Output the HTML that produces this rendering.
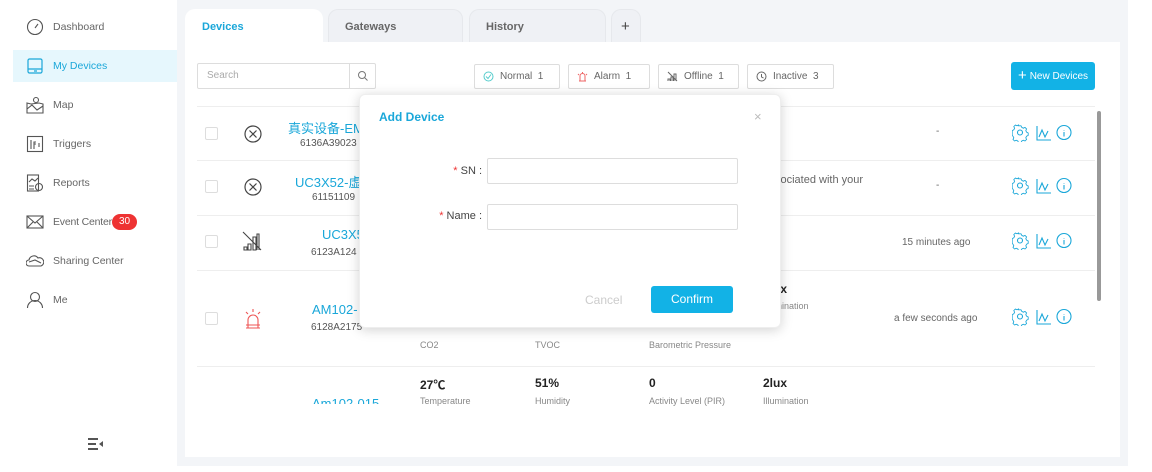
<!DOCTYPE html>
<html><head><meta charset="utf-8"><style>
*{box-sizing:border-box;margin:0;padding:0}
body{width:1152px;height:472px;overflow:hidden;background:#fff;font-family:"Liberation Sans","Noto Sans CJK SC",sans-serif;position:relative;color:#333}
.a{position:absolute}
.nav{position:absolute;left:13px;width:164px;height:32px;font-size:10.5px;color:#666;display:flex;align-items:center}
.nav svg{position:absolute;left:13px}
.nav span{position:absolute;left:40px}
.sel{background:#e6f7fd;color:#1aa7d9}
.tab{position:absolute;top:9px;height:33px;border-radius:10px 10px 0 0;background:#eff1f5;border:1px solid #e6e8ec;border-bottom:none;font-size:11px;font-weight:bold;color:#666;padding:11px 0 0 16px}
.chip{position:absolute;top:64px;height:25px;border:1px solid #ddd;border-radius:2px;font-size:10px;color:#666;display:flex;align-items:center;padding-left:8px;gap:6px;background:#fff}
.line{position:absolute;left:197px;width:898px;height:1px;background:#eee}
.cb{position:absolute;left:205px;width:13px;height:13px;border:1px solid #ddd;border-radius:2px}
.nm{position:absolute;font-size:13px;color:#1aa7d9}
.sn{position:absolute;font-size:10px;color:#555}
.val{position:absolute;font-size:12px;font-weight:bold;color:#222}
.lbl{position:absolute;font-size:9px;color:#888;line-height:12px}
.tm{position:absolute;font-size:10px;color:#666}
</style></head><body>
<div class="nav" style="top:11px"><svg width="18" height="18" viewBox="0 0 18 18" fill="none" stroke="#555" stroke-width="1.1"><circle cx="9" cy="9" r="7.5"/><path d="M9 10l3-4"/></svg><span>Dashboard</span></div>
<div class="nav sel" style="top:50px"><svg width="18" height="18" viewBox="0 0 18 18" fill="none" stroke="#1aa7d9" stroke-width="1.2"><rect x="2" y="2" width="14" height="14" rx="1.5"/><path d="M2 12h14M8 14h3"/></svg><span>My Devices</span></div>
<div class="nav" style="top:89px"><svg width="18" height="18" viewBox="0 0 18 18" fill="none" stroke="#555" stroke-width="1.1"><path d="M1 7l4 1 8-1 4 1v9H1z M1 13l5-4 5 5 6-4"/><circle cx="10" cy="4" r="2.5"/></svg><span>Map</span></div>
<div class="nav" style="top:128px"><svg width="18" height="18" viewBox="0 0 18 18" fill="none" stroke="#555" stroke-width="1.1"><rect x="1.5" y="1.5" width="15" height="15"/><path d="M5 5v9M8 14V7h2M8 9h2M13 8v4"/></svg><span>Triggers</span></div>
<div class="nav" style="top:167px"><svg width="18" height="18" viewBox="0 0 18 18" fill="none" stroke="#555" stroke-width="1.1"><rect x="1.5" y="1" width="11" height="16"/><path d="M3 8l3-3 3 2 3-3M3 12h5M3 15h5"/><circle cx="13" cy="13" r="3.5"/></svg><span>Reports</span></div>
<div class="nav" style="top:206px"><svg width="18" height="18" viewBox="0 0 18 18" fill="none" stroke="#555" stroke-width="1.1"><rect x="1" y="3" width="16" height="12"/><path d="M1 3l8 7 8-7M1 15l6-6M17 15l-6-6"/></svg><span style="letter-spacing:-0.2px">Event Center</span></div>
<div class="a" style="left:112px;top:214px;width:25px;height:16px;border-radius:8px;background:#ee3333;color:#fff;font-size:10px;text-align:center;line-height:16px">30</div>
<div class="nav" style="top:245px"><svg width="18" height="18" viewBox="0 0 18 18" fill="none" stroke="#555" stroke-width="1.1"><path d="M3 14a3 3 0 010-6 5 5 0 019-2 4 4 0 013 8z M3 10l6-2 6 3"/></svg><span>Sharing Center</span></div>
<div class="nav" style="top:284px"><svg width="18" height="18" viewBox="0 0 18 18" fill="none" stroke="#555" stroke-width="1.1"><circle cx="9" cy="6" r="4.5"/><path d="M1.5 17a7.5 7.5 0 0115 0"/></svg><span>Me</span></div>
<svg class="a" style="left:87px;top:437px" width="18" height="14" viewBox="0 0 18 14" fill="#555"><rect x="1" y="1" width="10" height="2"/><rect x="1" y="6" width="8" height="2"/><rect x="1" y="11" width="10" height="2"/><path d="M16 4v6l-4-3z"/></svg>
<div class="a" style="left:177px;top:0;width:951px;height:466px;background:#f3f5f8"></div>
<div class="a" style="left:185px;top:42px;width:935px;height:415px;background:#fff"></div>
<div class="tab" style="left:185px;width:138px;background:#fff;border-color:#fff;color:#1aa7d9">Devices</div>
<div class="tab" style="left:328px;width:135px">Gateways</div>
<div class="tab" style="left:469px;width:137px">History</div>
<div class="tab" style="left:611px;width:30px;padding:8px 0 0 9px;font-weight:normal;font-size:15px;color:#444">+</div>
<div class="a" style="left:197px;top:63px;width:179px;height:26px;border:1px solid #ddd;border-radius:2px"></div>
<div class="a" style="left:349px;top:63px;width:1px;height:26px;background:#ddd"></div>
<div class="a" style="left:207px;top:70px;font-size:10px;color:#aaa">Search</div>
<svg class="a" style="left:357px;top:70px" width="12" height="12" viewBox="0 0 12 12" fill="none" stroke="#777"><circle cx="5" cy="5" r="3.5"/><path d="M7.5 7.5l3 3"/></svg>
<div class="chip" style="left:474px;width:86px"><svg width="11" height="11" viewBox="0 0 11 11" fill="none" stroke="#5cc"><circle cx="5.5" cy="5.5" r="4.5"/><path d="M3 5.5l2 2 3-4"/></svg>Normal&nbsp;&nbsp;1</div>
<div class="chip" style="left:568px;width:82px"><svg width="11" height="11" viewBox="0 0 11 11" fill="none" stroke="#e66"><path d="M2 10h7M3 10V5a2.5 2.5 0 015 0v5M5.5 1v1M1 3l1 1M10 3l-1 1"/></svg>Alarm&nbsp;&nbsp;1</div>
<div class="chip" style="left:658px;width:81px"><svg width="11" height="11" viewBox="0 0 11 11" fill="none" stroke="#666"><path d="M1 10V8h2v2M4 10V6h2v4M7 10V3h2v7M1 1l9 9"/></svg>Offline&nbsp;&nbsp;1</div>
<div class="chip" style="left:747px;width:87px"><svg width="11" height="11" viewBox="0 0 11 11" fill="none" stroke="#666"><circle cx="5.5" cy="5.5" r="4.5"/><path d="M5.5 3v3l2 1"/></svg>Inactive&nbsp;&nbsp;3</div>
<div class="a" style="left:1011px;top:62px;width:84px;height:28px;background:#12b2e6;border-radius:3px;color:#fff;font-size:10px;display:flex;align-items:center;justify-content:center;gap:3px"><span style="font-size:15px;line-height:10px">+</span>New Devices</div>
<div class="line" style="top:106px"></div>
<div class="line" style="top:160px"></div>
<div class="line" style="top:215px"></div>
<div class="line" style="top:270px"></div>
<div class="line" style="top:366px"></div>
<div class="a" style="left:1097px;top:111px;width:4px;height:190px;background:#999;border-radius:2px"></div>
<div class="cb" style="top:127px"></div><div class="cb" style="top:180px"></div><div class="cb" style="top:235px"></div><div class="cb" style="top:312px"></div>
<svg class="a" style="left:243px;top:124px" width="20" height="20" viewBox="0 0 20 20" fill="none" stroke="#444" stroke-width="1.2"><circle cx="10" cy="10" r="8"/><path d="M6.5 6.5l7 7M13.5 6.5l-7 7"/></svg>
<svg class="a" style="left:243px;top:177px" width="20" height="20" viewBox="0 0 20 20" fill="none" stroke="#444" stroke-width="1.2"><circle cx="10" cy="10" r="8"/><path d="M6.5 6.5l7 7M13.5 6.5l-7 7"/></svg>
<svg class="a" style="left:242px;top:231px" width="22" height="22" viewBox="0 0 22 22" fill="none" stroke="#444" stroke-width="1.1"><path d="M2 19v-3h3v3zM6 19v-6h3v6zM11 19V6h3v13zM15 19V3h2v16M1 1l18 18"/></svg>
<svg class="a" style="left:243px;top:308px" width="20" height="22" viewBox="0 0 20 22" fill="none" stroke="#e55" stroke-width="1.1"><path d="M3 20h14M5 20v-8a5 5 0 0110 0v8M3 17h14M10 1v3M3 4l2 2M17 4l-2 2"/></svg>
<div class="nm" style="left:288px;top:118px">真实设备-EM</div><div class="sn" style="left:300px;top:138px">6136A39023</div>
<div class="nm" style="left:295px;top:172px">UC3X52-虚</div><div class="sn" style="left:312px;top:192px">61151109</div>
<div class="nm" style="left:322px;top:227px">UC3X5</div><div class="sn" style="left:311px;top:247px">6123A124</div>
<div class="nm" style="left:312px;top:302px">AM102-</div><div class="sn" style="left:311px;top:322px">6128A2175</div>
<div class="nm" style="left:312px;top:396px;height:8px;overflow:hidden">Am102-015</div>
<div class="lbl" style="left:420px;top:339px">CO2</div><div class="lbl" style="left:535px;top:339px">TVOC</div><div class="lbl" style="left:649px;top:339px">Barometric Pressure</div>
<div class="val" style="left:763px;top:282px">2lux</div><div class="lbl" style="left:763px;top:300px">Illumination</div>
<div class="val" style="left:420px;top:376px">27℃</div><div class="lbl" style="left:420px;top:395px">Temperature</div>
<div class="val" style="left:535px;top:376px">51%</div><div class="lbl" style="left:535px;top:395px">Humidity</div>
<div class="val" style="left:649px;top:376px">0</div><div class="lbl" style="left:649px;top:395px">Activity Level (PIR)</div>
<div class="val" style="left:763px;top:376px">2lux</div><div class="lbl" style="left:763px;top:395px">Illumination</div>
<div class="tm" style="left:775px;top:174px;font-size:11px">sociated with your</div>
<div class="tm" style="left:936px;top:126px">-</div><div class="tm" style="left:936px;top:180px">-</div>
<div class="tm" style="left:902px;top:237px">15 minutes ago</div>
<div class="tm" style="left:894px;top:313px">a few seconds ago</div>
<svg width="0" height="0" style="position:absolute"><defs><g id="ic" fill="none" stroke="#1aa7d9" stroke-width="1.1"><path d="M7 1l3 0 1 2 2 1 2-1 2 2-1 2 1 2 2 1v3l-2 1-1 2 1 2-2 2-2-1-2 1-1 2H7l-1-2-2-1-2 1-2-2 1-2-1-2-1-1V7l2-1 1-2-1-2 2-2 2 1 2-1z" transform="translate(1 1) scale(.8)"/><circle cx="8" cy="8.5" r="2.5"/><path d="M25 2v14h14M27 13l3-7 3 7 3-6" /><circle cx="52" cy="8.5" r="7"/><path d="M52 6.5v0.5M51.5 8.5l.5 0v4"/></g></defs></svg>
<svg class="a" style="left:1012px;top:124px" width="64" height="18"><use href="#ic"/></svg>
<svg class="a" style="left:1012px;top:177px" width="64" height="18"><use href="#ic"/></svg>
<svg class="a" style="left:1012px;top:232px" width="64" height="18"><use href="#ic"/></svg>
<svg class="a" style="left:1012px;top:308px" width="64" height="18"><use href="#ic"/></svg>
<div class="a" style="left:359px;top:94px;width:422px;height:234px;background:#fff;border-radius:6px;box-shadow:0 2px 12px rgba(0,0,0,.18);border:1px solid #eee">
 <div class="a" style="left:19px;top:15px;font-size:12px;font-weight:bold;color:#1aa7d9">Add Device</div>
 <div class="a" style="left:394px;top:14px;font-size:13px;color:#bbb">×</div>
 <div class="a" style="left:60px;top:70px;width:62px;text-align:right;font-size:11px;color:#444"><span style="color:#e33">*</span> SN :</div>
 <div class="a" style="left:127px;top:63px;width:251px;height:26px;border:1px solid #ddd;border-radius:2px"></div>
 <div class="a" style="left:60px;top:115px;width:62px;text-align:right;font-size:11px;color:#444"><span style="color:#e33">*</span> Name :</div>
 <div class="a" style="left:127px;top:109px;width:251px;height:26px;border:1px solid #ddd;border-radius:2px"></div>
 <div class="a" style="left:225px;top:198px;font-size:12px;color:#ccc">Cancel</div>
 <div class="a" style="left:291px;top:191px;width:82px;height:27px;background:#12b2e6;border-radius:3px;color:#fff;font-size:12px;text-align:center;line-height:27px">Confirm</div>
</div>
</body></html>
